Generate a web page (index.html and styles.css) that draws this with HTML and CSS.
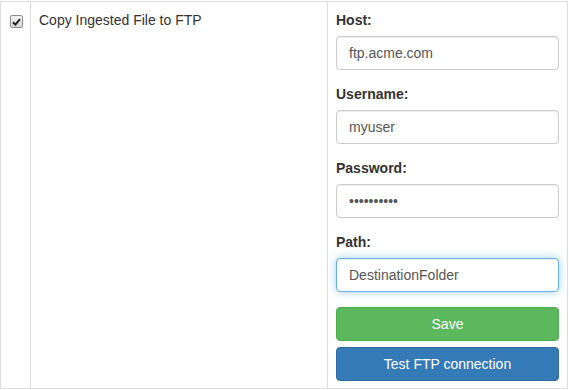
FILE: index.html
```html
<!DOCTYPE html>
<html lang="en">
<head>
  <meta charset="UTF-8" />
  <title>FTP Settings</title>
  <link rel="stylesheet" href="styles.css">
</head>
<body>
  <table class="task-table">
    <tr>
      <td class="col-check">
        <span class="fake-check">
          <svg width="9" height="8" viewBox="0 0 9 8"><path d="M1 4.2 L3.4 6.6 L8 1.2" fill="none" stroke="#222" stroke-width="2"/></svg>
        </span>
      </td>
      <td class="col-name">Copy Ingested File to FTP</td>
      <td class="col-form">
        <div class="form-group">
          <label for="host">Host:</label>
          <input type="text" id="host" class="form-control" value="ftp.acme.com" />
        </div>
        <div class="form-group">
          <label for="user">Username:</label>
          <input type="text" id="user" class="form-control" value="myuser" />
        </div>
        <div class="form-group">
          <label for="pass">Password:</label>
          <input type="password" id="pass" class="form-control" value="secretpass" />
        </div>
        <div class="form-group">
          <label for="path">Path:</label>
          <input type="text" id="path" class="form-control focused" value="DestinationFolder" />
        </div>
        <button class="btn btn-save">Save</button>
        <button class="btn btn-test">Test FTP connection</button>
      </td>
    </tr>
  </table>
</body>
</html>
```

FILE: styles.css
```css
* { box-sizing: border-box; }

body {
  margin: 0;
  padding-top: 1px;
  font-family: "Liberation Sans", Arial, sans-serif;
  font-size: 14px;
  line-height: 1.42857;
  color: #333;
  background: #fff;
}

.task-table {
  border-collapse: collapse;
  width: 568px;
}

.task-table td {
  border: 1px solid #ddd;
  padding: 9px 8px 7px;
  vertical-align: top;
}

.task-table td.col-check {
  width: 30px;
  padding: 13px 0 0 9px;
}

.task-table td.col-name {
  width: 297px;
  padding-left: 8px;
}

.col-form {
  width: 240px;
}

.fake-check {
  display: flex;
  align-items: center;
  justify-content: center;
  width: 13px;
  height: 13px;
  border: 1px solid #8e8e8e;
  border-radius: 2px;
  background: linear-gradient(#f4f4f4, #d6d6d6);
}

.form-group {
  margin-bottom: 15px;
}

label {
  display: block;
  font-weight: bold;
  margin-bottom: 5px;
  max-width: 100%;
}

.form-control {
  display: block;
  width: 100%;
  height: 34px;
  padding: 6px 12px;
  font-family: inherit;
  font-size: 14px;
  color: #555;
  background: #fff;
  border: 1px solid #ccc;
  border-radius: 4px;
  box-shadow: inset 0 1px 1px rgba(0,0,0,0.075);
  outline: none;
}

.form-control.focused {
  border-color: #66afe9;
  box-shadow: inset 0 1px 1px rgba(0,0,0,0.075), 0 0 8px rgba(102,175,233,0.6);
}

.btn {
  display: block;
  width: 100%;
  height: 34px;
  padding: 6px 12px;
  font-family: inherit;
  font-size: 14px;
  color: #fff;
  border: 1px solid transparent;
  border-radius: 4px;
  cursor: pointer;
}

.btn-save {
  background-color: #5cb85c;
  border-color: #4cae4c;
  margin-bottom: 6px;
}

.btn-test {
  background-color: #337ab7;
  border-color: #2e6da4;
}
```
